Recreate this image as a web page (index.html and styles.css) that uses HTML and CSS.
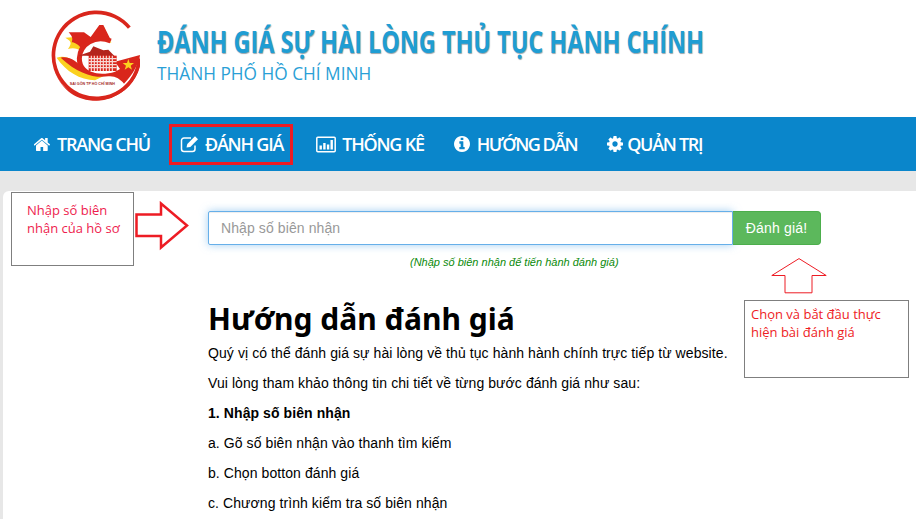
FILE: index.html
```html
<!DOCTYPE html>
<html lang="vi">
<head>
<meta charset="utf-8">
<title>Đánh giá sự hài lòng</title>
<link rel="stylesheet" href="styles.css">
</head>
<body>
<header class="brand">
  <svg class="logo" viewBox="0 0 300 300" aria-hidden="true">
    <circle cx="169" cy="152" r="130" fill="#fff"/>
    <path d="M268 68A129 129 0 1 0 298 160" fill="none" stroke="#d9261c" stroke-width="11"/>
    <path d="M52 215C75 262 125 278 169 277C230 276 280 235 298 165L303 160C300 225 240 287 169 287C110 287 65 255 45 200Z" fill="#d9261c"/>
    <path d="M76 98L135 94L152 106L172 70L192 66L214 114C176 96 140 108 124 140C112 128 96 128 84 132C98 112 92 108 76 98Z" fill="#fbd11f"/>
    <path d="M86 82L132 82L152 96L178 60L190 60L214 108C180 90 135 105 122 128C112 116 102 112 95 112C100 100 95 92 86 82Z" fill="#d9261c"/>
    <path d="M212 108C165 88 120 118 118 160C118 190 135 205 165 212" fill="none" stroke="#d9261c" stroke-width="15"/>
    <path d="M50 158C80 148 108 168 128 192C145 206 162 212 190 214L165 226C120 224 78 200 50 158Z" fill="#fbd11f"/>
    <path d="M62 158C90 152 112 172 130 190C150 206 190 212 225 200L240 192L225 170L300 150C298 172 280 208 252 236C240 222 225 212 205 214C165 220 115 208 62 158Z" fill="#d9261c"/>
    <path d="M115 152L150 140L160 124L190 136L205 134L230 160L140 152Z" fill="#b3241c"/>
    <rect x="146" y="152" width="84" height="46" fill="#d9261c"/>
    <path d="M146 161H230M146 170H230M146 179H230M146 188H230M154 152V198M163 152V198M172 152V198M181 152V198M190 152V198M199 152V198M208 152V198M217 152V198" stroke="#f7d9d4" stroke-width="3.500" fill="none"/>
    <path d="M265 162L269 174H282L272 182L276 194L265 187L254 194L258 182L248 174H261Z" fill="#fbd11f"/>
    <text class="logo-text" x="157" y="240" text-anchor="middle">SAI GÒN TP HỒ CHÍ MINH</text>
  </svg>
  <div class="titles">
    <h2 class="title-main">ĐÁNH GIÁ SỰ HÀI LÒNG THỦ TỤC HÀNH CHÍNH</h2>
    <div class="title-sub">THÀNH PHỐ HỒ CHÍ MINH</div>
  </div>
</header>

<nav class="nav">
  <a class="nav-item nav-home" href="#">
    <svg class="ico ico-home" viewBox="64 256 1664 1280"><path d="M1408 992v480q0 26-19 45t-45 19h-384v-384h-256v384h-384q-26 0-45-19t-19-45v-480q0-1 .5-3t.5-3l575-474 575 474q1 2 1 6zm223-69l-62 74q-8 9-21 11h-3q-13 0-21-7l-692-577-692 577q-12 8-24 7-13-2-21-11l-62-74q-8-10-7-23.500t11-21.500l719-599q32-26 76-26t76 26l244 204v-195q0-14 9-23t23-9h192q14 0 23 9t9 23v408l219 182q10 8 11 21.500t-7 23.500z"/></svg>
    TRANG CHỦ</a>
  <a class="nav-item nav-rate" href="#">
    <svg class="ico ico-line" viewBox="0 0 20 18"><path d="M15 10.500V14a2.500 2.500 0 0 1-2.500 2.500H4A2.500 2.500 0 0 1 1.500 14V5.500A2.500 2.500 0 0 1 4 3h7" fill="none" stroke="#fff" stroke-width="1.500"/><path d="M6.500 12.500L7.300 9L15 1.300L18 4.300L10.300 12Z" fill="#fff"/></svg>
    ĐÁNH GIÁ</a>
  <a class="nav-item nav-stats" href="#">
    <svg class="ico ico-chart" viewBox="0 0 20 17"><rect x=".8" y="1.300" width="18.400" height="14.400" rx="1" fill="none" stroke="#fff" stroke-width="1.500"/><path d="M3.500 9.500h2.400v4H3.500zM7.200 7h2.400v6.500H7.200zM10.900 8.500h2.400v5h-2.400zM14.500 4h2.400v9.500h-2.400z" fill="#fff"/></svg>
    THỐNG KÊ</a>
  <a class="nav-item nav-guide" href="#">
    <svg class="ico" viewBox="128 128 1536 1536"><path d="M1152 1376v-160q0-14-9-23t-23-9h-96v-512q0-14-9-23t-23-9h-320q-14 0-23 9t-9 23v160q0 14 9 23t23 9h96v320h-96q-14 0-23 9t-9 23v160q0 14 9 23t23 9h448q14 0 23-9t9-23zm-128-896v-160q0-14-9-23t-23-9h-192q-14 0-23 9t-9 23v160q0 14 9 23t23 9h192q14 0 23-9t9-23zm640 416q0 209-103 385.500t-279.500 279.500-385.500 103-385.500-103-279.500-279.500-103-385.500 103-385.500 279.500-279.500 385.500-103 385.500 103 279.500 279.500 103 385.500z"/></svg>
    HƯỚNG DẪN</a>
  <a class="nav-item nav-admin" href="#">
    <svg class="ico" viewBox="128 128 1536 1536"><path d="M1152 896q0-106-75-181t-181-75-181 75-75 181 75 181 181 75 181-75 75-181zm512-109v222q0 12-8 23t-20 13l-185 28q-19 54-39 91 35 50 107 138 10 12 10 25t-9 23q-27 37-99 108t-94 71q-12 0-26-9l-138-108q-44 23-91 38-16 136-29 186-7 28-36 28h-222q-14 0-24.500-8.500t-11.500-21.500l-28-184q-49-16-90-37l-141 107q-10 9-25 9-14 0-25-11-126-114-165-168-7-10-7-23 0-12 8-23 15-21 51-66.500t54-70.500q-27-50-41-99l-183-27q-13-2-21-12.500t-8-23.500v-222q0-12 8-23t19-13l186-28q14-46 39-92-40-57-107-138-10-12-10-24 0-10 9-23 26-36 98.500-107.500t94.500-71.500q13 0 26 10l138 107q44-23 91-38 16-136 29-186 7-28 36-28h222q14 0 24.500 8.500t11.500 21.500l28 184q49 16 90 37l142-107q9-9 24-9 13 0 25 10 129 119 165 170 7 8 7 22 0 12-8 23-15 21-51 66.500t-54 70.500q26 50 41 98l183 28q13 2 21 12.500t8 23.500z"/></svg>
    QUẢN TRỊ</a>
</nav>

<main class="panel">
  <div class="column">
    <form class="search">
      <input class="search-input" type="text" placeholder="Nhập số biên nhận">
      <button class="search-btn" type="button">Đánh giá!</button>
    </form>
    <p class="hint">(Nhập số biên nhận để tiến hành đánh giá)</p>
    <h1 class="heading">Hướng dẫn đánh giá</h1>
    <p class="para">Quý vị có thể đánh giá sự hài lòng về thủ tục hành hành chính trực tiếp từ website.</p>
    <p class="para">Vui lòng tham khảo thông tin chi tiết về từng bước đánh giá như sau:</p>
    <p class="para"><b>1. Nhập số biên nhận</b></p>
    <p class="para">a. Gõ số biên nhận vào thanh tìm kiếm</p>
    <p class="para">b. Chọn botton đánh giá</p>
    <p class="para">c. Chương trình kiểm tra số biên nhận</p>
  </div>

  <div class="note note-left">Nhập số biên nhận của hồ sơ</div>
  <svg class="arrow arrow-right" viewBox="0 0 54 50"><path d="M1.500 13.500H26V2.500L52 24.500L26 46.500V35H1.500Z" fill="#fff" stroke="#ed1c24" stroke-width="2.500"/></svg>
  <svg class="arrow arrow-up" viewBox="0 0 56 36"><path d="M.8 17.500L28 .6L55.200 17.500H41V34.800H14V17.500Z" fill="#fff" stroke="#ed1c24" stroke-width="1"/></svg>
  <div class="note note-right">Chọn và bắt đầu thực hiện bài đánh giá</div>
</main>
</body>
</html>
```
FILE: styles.css
```css
* { box-sizing: border-box; }
html, body { margin: 0; height: 519px; overflow: hidden; }
body { background: #e7e7e7; font-family: "Liberation Sans", Arial, sans-serif; font-size: 14px; color: #000; }

.brand { height: 117px; background: #fff; display: flex; align-items: flex-start; padding: 5px 0 0 40px; }
.logo { width: 100px; height: 100px; flex: none; }
.logo-text { font-family: "Liberation Sans", sans-serif; font-size: 11px; font-weight: 700; fill: #a5261e; }
.titles { margin-left: 17px; padding-top: 18px; }
.title-main { margin: 0; font-family: "Open Sans", sans-serif; font-weight: 700; font-size: 31px; line-height: 36px; color: #1f9dd3; white-space: nowrap; text-shadow: 1px 1px 1px #9aa6ad; transform: scaleX(.755); transform-origin: left center; }
.title-sub { font-family: "Open Sans", sans-serif; font-size: 17.300px; line-height: 24px; color: #2a9fd6; margin-top: 3px; white-space: nowrap; }

.nav { height: 54px; background: #0a86cb; display: flex; align-items: center; padding-left: 34px; }
.nav-item { display: flex; align-items: center; color: #fff; text-decoration: none; font-family: "Open Sans", sans-serif; font-weight: 600; font-size: 18px; letter-spacing: -1.200px; white-space: nowrap; }
.ico { height: 16px; width: 16px; fill: #fff; flex: none; margin-right: 6px; }
.ico-home { width: 17px; height: 13px; }
.ico-line { width: 20px; height: 18px; margin-right: 5px; }
.ico-chart { width: 20px; height: 17px; margin-right: 6px; }
.nav-rate { height: 41px; border: 3px solid #ed1c24; margin-left: 19px; padding: 0 7px 0 8px; }
.nav-stats { margin-left: 23px; }
.nav-guide { margin-left: 30px; letter-spacing: -1.500px; }
.nav-admin { margin-left: 30px; letter-spacing: -1.300px; }
.nav-admin .ico { margin-right: 4px; }
.nav-guide .ico { margin-right: 7px; }

.panel { position: relative; margin: 20px 0 0 3px; height: 340px; background: #fff; border-radius: 6px 0 0 0; }
.column { width: 613px; margin-left: 205px; padding-top: 20px; }
.search { display: flex; height: 34px; }
.search-input { flex: 1; min-width: 0; height: 34px; padding: 6px 12px; border: 1px solid #66afe9; border-radius: 2px 0 0 2px; outline: 0; font: 14px "Liberation Sans", sans-serif; letter-spacing: .1px; box-shadow: inset 0 1px 1px rgba(0,0,0,.075), 0 0 8px rgba(102,175,233,.6); }
.search-input::placeholder { color: #999; }
.search-btn { width: 88px; height: 34px; border: 1px solid #4cae4c; border-left: 0; border-radius: 0 4px 4px 0; background: #5cb85c; color: #fff; font: 14px "Liberation Sans", sans-serif; letter-spacing: .2px; padding: 0; }
.hint { margin: 10px 0 0 202px; font-size: 11px; line-height: 14px; font-style: italic; color: #0a8a0a; white-space: nowrap; }
.heading { margin: 32px 0 0; font-family: "Noto Sans", sans-serif; font-weight: 700; font-size: 30px; line-height: 36px; white-space: nowrap; }
.para { margin: 10px 0 0; line-height: 20px; letter-spacing: .08px; white-space: nowrap; }
.heading + .para { margin-top: 6px; }

.note { position: absolute; background: #fff; border: 1px solid #7f7f7f; font-family: "Open Sans", sans-serif; font-size: 13px; line-height: 18px; }
.note-left { left: 8px; top: 1px; width: 123px; height: 74px; padding: 8px 8px 0 15px; color: #ee1c4e; }
.note-right { left: 741px; top: 109px; width: 165px; height: 78px; padding: 4px 8px 0 6px; color: #ee1c25; }
.arrow { position: absolute; }
.arrow-right { left: 132px; top: 10px; width: 54px; height: 50px; }
.arrow-up { left: 768px; top: 67px; width: 56px; height: 36px; }
```
